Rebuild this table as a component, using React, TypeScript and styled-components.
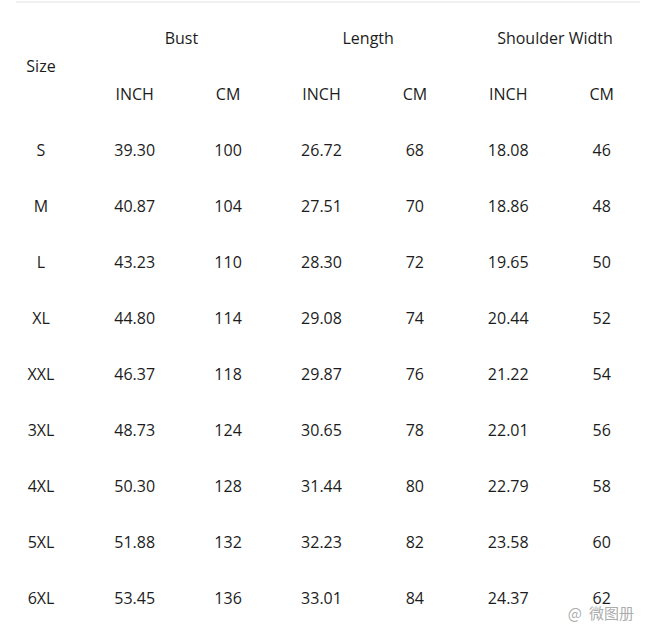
import React from 'react'
import styled, { createGlobalStyle } from 'styled-components'

const GlobalStyle = createGlobalStyle`
  html, body {
    margin: 0;
    padding: 0;
    background: #ffffff;
  }
  body {
    font-family: 'Open Sans', 'Noto Sans', sans-serif;
    color: #1c1c1c;
  }
`

const Page = styled.div`
  position: relative;
  width: 652px;
  height: 630px;
  overflow: hidden;
  background: #ffffff;
`

const TopRule = styled.div`
  height: 2px;
  margin: 1px 12px 0 16px;
  background: #f0f0f0;
`

const Table = styled.div`
  display: grid;
  grid-template-columns: 88px repeat(6, 93.4px);
  grid-auto-rows: 56px;
  margin-top: 7px;
  font-size: 16px;
`

const Cell = styled.div<{ $span?: number; $rows?: number; $shift?: number }>`
  display: flex;
  align-items: center;
  justify-content: center;
  white-space: nowrap;
  grid-column: ${(p) => (p.$span ? `span ${p.$span}` : 'auto')};
  grid-row: ${(p) => (p.$rows ? `span ${p.$rows}` : 'auto')};
  padding-right: ${(p) => p.$shift || 0}px;
`

const Watermark = styled.div`
  position: absolute;
  right: 18px;
  bottom: 9px;
  display: flex;
  align-items: center;
  gap: 7px;
  font-family: 'Noto Sans CJK SC', 'Noto Sans', sans-serif;
  font-size: 15px;
  line-height: 16px;
  color: rgba(150, 150, 150, 0.8);
  text-shadow: 0 0 2px #ffffff, 0 0 2px #ffffff;
`

const rows: string[][] = [
  ['S', '39.30', '100', '26.72', '68', '18.08', '46'],
  ['M', '40.87', '104', '27.51', '70', '18.86', '48'],
  ['L', '43.23', '110', '28.30', '72', '19.65', '50'],
  ['XL', '44.80', '114', '29.08', '74', '20.44', '52'],
  ['XXL', '46.37', '118', '29.87', '76', '21.22', '54'],
  ['3XL', '48.73', '124', '30.65', '78', '22.01', '56'],
  ['4XL', '50.30', '128', '31.44', '80', '22.79', '58'],
  ['5XL', '51.88', '132', '32.23', '82', '23.58', '60'],
  ['6XL', '53.45', '136', '33.01', '84', '24.37', '62'],
]

const groups = ['Bust', 'Length', 'Shoulder Width']

export default function App() {
  return (
    <Page>
      <GlobalStyle />
      <TopRule />
      <Table>
        <Cell $rows={2} $shift={6}>Size</Cell>
        {groups.map((g) => (
          <Cell key={g} $span={2}>{g}</Cell>
        ))}
        {groups.map((g) => (
          <React.Fragment key={g}>
            <Cell>INCH</Cell>
            <Cell>CM</Cell>
          </React.Fragment>
        ))}
        {rows.map((r) =>
          r.map((v, i) => (
            <Cell key={r[0] + i} $shift={i === 0 ? 6 : 0}>
              {v}
            </Cell>
          ))
        )}
      </Table>
      <Watermark>
        <span>@</span>
        <span>微图册</span>
      </Watermark>
    </Page>
  )
}
